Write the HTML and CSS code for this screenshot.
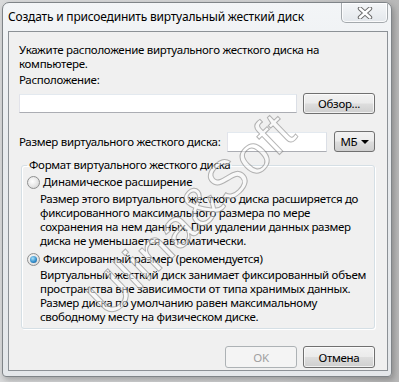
FILE: index.html
```html
<!DOCTYPE html>
<html lang="ru">
<head>
  <meta charset="UTF-8">
  <title>Создать и присоединить виртуальный жесткий диск</title>
  <link rel="stylesheet" href="styles.css">
</head>
<body>

  <div class="window">
    <div class="titlebar">
      <span class="title">Создать и присоединить виртуальный жесткий диск</span>
      <div class="close">
        <svg width="16" height="12" viewBox="0 0 16 12">
          <path d="M3 1.5 L13 10.5 M13 1.5 L3 10.5" stroke="#6c6c6c" stroke-width="4.4" stroke-linecap="round"/>
          <path d="M3 1.5 L13 10.5 M13 1.5 L3 10.5" stroke="#ffffff" stroke-width="2.4" stroke-linecap="round"/>
        </svg>
      </div>
    </div>

    <div class="client">
      <p class="intro">Укажите расположение виртуального жесткого диска на<br>компьютере.</p>
      <div class="label">Расположение:</div>
      <div class="row path-row">
        <input type="text" class="field path">
        <button class="btn browse">Обзор...</button>
      </div>

      <div class="row size-row">
        <span class="size-label">Размер виртуального жесткого диска:</span>
        <input type="text" class="field size">
        <div class="combo">МБ <span class="arrow"></span></div>
      </div>

      <fieldset class="group">
        <legend>Формат виртуального жесткого диска</legend>
        <div class="option"><span class="radio"></span>Динамическое расширение</div>
        <p class="desc">Размер этого виртуального жесткого диска расширяется до<br>фиксированного максимального размера по мере<br>сохранения на нем данных. При удалении данных размер<br>диска не уменьшается автоматически.</p>
        <div class="option second"><span class="radio checked"></span>Фиксированный размер (рекомендуется)</div>
        <p class="desc desc-fixed">Виртуальный жесткий диск занимает фиксированный объем<br>пространства вне зависимости от типа хранимых данных.<br>Размер диска по умолчанию равен максимальному<br>свободному месту на физическом диске.</p>
      </fieldset>

      <div class="actions">
        <button class="btn" disabled>OK</button>
        <button class="btn">Отмена</button>
      </div>
    </div>

    <div class="watermark">Ulina&amp;Soft</div>
  </div>

</body>
</html>
```

FILE: styles.css
```css
body {
  margin: 0;
  width: 399px;
  height: 382px;
  overflow: hidden;
  background: linear-gradient(to right, #d9dadb 0%, #cfd0d1 70%, #b8b8b8 100%);
  font-family: "Noto Sans", "Open Sans", sans-serif;
  font-size: 11.5px;
  color: #000;
}
.window {
  position: relative;
  margin: 2px 0 0 2px;
  width: 388px;
  height: 373px;
  border: 1px solid #7f8488;
  border-radius: 7px 7px 4px 4px;
  background: linear-gradient(to bottom, #f3f5f7 0%, #e7eaed 40%, #e4e7ea 100%);
  box-shadow: 2px 3px 6px rgba(0, 0, 0, 0.25);
  overflow: hidden;
}
.titlebar {
  display: flex;
  justify-content: space-between;
  align-items: flex-start;
  height: 28px;
  padding-left: 5px;
}
.title {
  padding-top: 7px;
  font-size: 12px;
  line-height: 14px;
  letter-spacing: -0.2px;
  white-space: nowrap;
}
.close {
  display: flex;
  justify-content: center;
  align-items: center;
  width: 45px;
  height: 19px;
  margin-right: 3px;
  border: 1px solid #a4a9ad;
  border-top: none;
  border-radius: 0 0 5px 5px;
  background: linear-gradient(to bottom, #f4f6f8, #e3e7eb);
  box-shadow: inset 0 0 0 1px rgba(255, 255, 255, 0.8);
}
.client {
  margin: 0 3px 0 5px;
  width: 356px;
  height: 311px;
  padding: 11px 12px 16px 10px;
  border: 1px solid #8c9196;
  background: #f0f0f0;
  line-height: 14px;
  letter-spacing: -0.3px;
  white-space: nowrap;
}
.intro {
  margin: 0;
}
.label {
  margin-top: 2px;
}
.row {
  display: flex;
  align-items: center;
}
.path-row {
  margin-top: 6px;
  height: 21px;
}
.field {
  box-sizing: border-box;
  height: 19px;
  border: 1px solid #abadb3;
  border-top-color: #e3e9ef;
  border-left-color: #e2e3ea;
  border-right-color: #dbdfe6;
  background: #fff;
  margin: 0;
}
.path {
  width: 278px;
}
.btn {
  box-sizing: border-box;
  height: 22px;
  width: 72px;
  padding: 0;
  border: 1px solid #707070;
  border-radius: 3px;
  background: linear-gradient(to bottom, #f2f2f2 0%, #ebebeb 48%, #dddddd 52%, #cfcfcf 100%);
  box-shadow: inset 0 0 0 1px rgba(255, 255, 255, 0.7);
  font-family: inherit;
  font-size: 11.5px;
  letter-spacing: -0.3px;
  color: #000;
}
.btn:disabled {
  border-color: #adb2b5;
  background: #f4f4f4;
  color: #a0a0a0;
  box-shadow: none;
}
.browse {
  margin-left: 6px;
  height: 21px;
}
.size-row {
  margin-top: 17px;
  height: 21px;
}
.size {
  margin-left: 7px;
  width: 100px;
  height: 20px;
}
.combo {
  box-sizing: border-box;
  display: flex;
  align-items: center;
  justify-content: space-between;
  margin-left: 7px;
  width: 43px;
  height: 21px;
  padding: 0 5px 0 5px;
  border: 1px solid #707070;
  border-radius: 3px;
  background: linear-gradient(to bottom, #f2f2f2 0%, #ebebeb 48%, #dddddd 52%, #cfcfcf 100%);
}
.arrow {
  width: 0;
  height: 0;
  border-left: 4px solid transparent;
  border-right: 4px solid transparent;
  border-top: 4px solid #000;
}
.group {
  margin: 6px 0 0 2px;
  padding: 0 6px 4px 5px;
  border: 1px solid #d5dfe5;
  border-radius: 3px;
  box-shadow: inset 1px 1px 0 #fff, 1px 1px 0 #fff;
}
.group legend {
  padding: 0 2px;
  margin-left: 0;
}
.option {
  display: flex;
  align-items: center;
  margin-top: 3px;
}
.option.second {
  margin-top: 4px;
}
.radio {
  box-sizing: border-box;
  position: relative;
  width: 13px;
  height: 13px;
  margin-right: 3px;
  border: 1px solid #8e8f8f;
  border-radius: 50%;
  background: radial-gradient(circle at 40% 40%, #ffffff 0%, #e8e8e8 50%, #cbcbcb 100%);
}
.radio.checked::after {
  content: "";
  position: absolute;
  left: 2px;
  top: 2px;
  width: 7px;
  height: 7px;
  border-radius: 50%;
  background: radial-gradient(circle at 40% 35%, #a8e0f8 0%, #2d89c8 60%, #164a7a 100%);
}
.desc {
  margin: 3px 0 0 13px;
}
.desc-fixed {
  margin-top: 2px;
}
.actions {
  display: flex;
  justify-content: flex-end;
  gap: 6px;
  margin-top: 17px;
}
.watermark {
  position: absolute;
  left: 55px;
  top: 180px;
  transform: rotate(-44deg);
  font-family: "Liberation Sans", sans-serif;
  font-size: 54px;
  letter-spacing: 1px;
  color: rgba(255, 255, 255, 0.5);
  -webkit-text-stroke: 1px rgba(110, 110, 110, 0.5);
  white-space: nowrap;
  pointer-events: none;
}
```
